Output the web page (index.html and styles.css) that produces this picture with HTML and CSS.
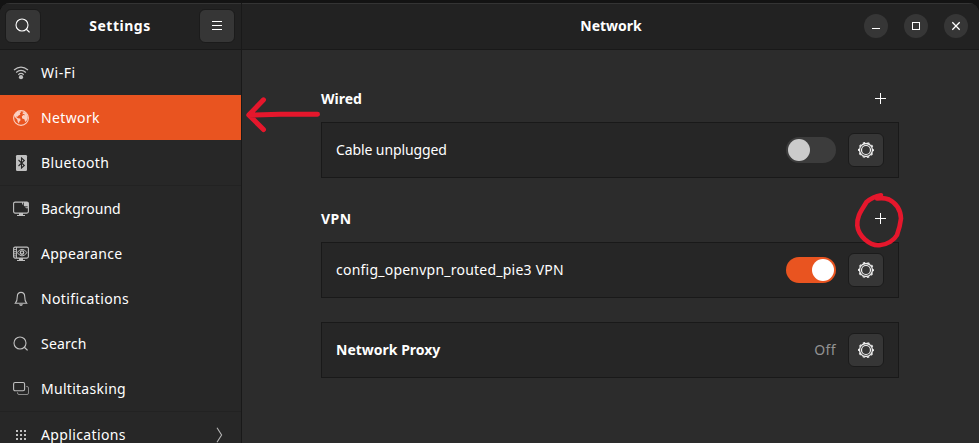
FILE: index.html
```html
<!DOCTYPE html>
<html lang="en">
<head>
<meta charset="utf-8">
<title>Settings</title>
<link rel="stylesheet" href="styles.css">
</head>
<body>
<svg class="defs" aria-hidden="true">
  <symbol id="gear" viewBox="0 0 18 18">
    <circle cx="9" cy="9" r="6.5" fill="none" stroke="currentColor" stroke-width="1.3"/>
    <circle cx="9" cy="9" r="7.4" fill="none" stroke="currentColor" stroke-width="1.2" stroke-dasharray="2.2 2.45" stroke-dashoffset="1.1"/>
    <circle cx="9" cy="9" r="4.5" fill="none" stroke="currentColor" stroke-width="1.2"/>
  </symbol>
  <symbol id="search" viewBox="0 0 16 16">
    <circle cx="7" cy="7" r="6" fill="none" stroke="currentColor" stroke-width="1.1"/>
    <path d="M11.3 11.3L14.6 14.4" fill="none" stroke="currentColor" stroke-width="1.3"/>
  </symbol>
</svg>
<div class="window">
  <aside class="sidebar">
    <header class="bar side-bar">
      <button class="btn"><svg class="icon"><use href="#search"/></svg></button>
      <h1 class="title wide">Settings</h1>
      <button class="btn"><svg class="icon" viewBox="0 0 16 16"><path d="M3 3.5h10M3 7.5h10M3 11.5h10" stroke="currentColor" shape-rendering="crispEdges"/></svg></button>
    </header>
    <nav class="nav">
      <a class="item t5"><svg class="icon" viewBox="0 0 16 16"><g fill="none" stroke="currentColor" stroke-width="1.2"><path d="M1 5Q8-.8 15 5M3.1 7.5Q8 3.2 12.9 7.5M5.3 9.7Q8 7.2 10.7 9.7"/></g><circle cx="8" cy="12.2" r="2.1" fill="currentColor"/></svg>Wi-Fi</a>
      <a class="item active t4"><svg class="icon" viewBox="0 0 16 16"><circle cx="8" cy="8" r="7.4" fill="none" stroke="currentColor" stroke-width="1.1"/><path d="M1.2 5.2Q3 1.5 7.2 1L8.3 2 6.8 3.2 7.4 4.6 5.6 5.4 4.5 6.8 3.2 6.4 3.8 7.5 5 8.2 7.2 8.6 7.6 10.2 6.3 11.5 6 13.6 4.8 12 4.2 9.5 2 7.2ZM9.8 2.2L12.2 2.3 14.3 5 14.8 8 13.6 10.8 12.2 12 11.4 9.3 9.2 8.4 8.8 6.6 10.3 5.1 12 5.3 11 4 9.6 4.2Z" fill="currentColor"/></svg>Network</a>
      <a class="item t4"><svg class="icon" viewBox="0 0 16 16"><rect x="3" width="11" height="16" rx="1.2" fill="currentColor"/><path d="M5.5 5L11.3 10.5 8.5 13V3L11.3 5.5 5.5 11" fill="none" stroke="#272727" stroke-width="1.1"/></svg>Bluetooth</a>
      <a class="item divided t0"><svg class="icon" viewBox="0 0 16 16"><rect x=".6" y="1.1" width="14.8" height="11" rx="1.5" fill="none" stroke="currentColor" stroke-width="1.1"/><path d="M9 1H14.4L15.4 2V7.2H13.2L9 3ZM6 12h4v2h2v1.1H4V14h2Z" fill="currentColor"/><path d="M10.4 1.7V5.8H14.6" stroke="#272727" fill="none" stroke-width=".9"/></svg>Background</a>
      <a class="item t3"><svg class="icon" viewBox="0 0 16 16"><rect x=".6" y="1.1" width="14.8" height="11" rx="1.5" fill="none" stroke="currentColor" stroke-width="1.1"/><path d="M6 12h4v2h2v1.1H4V14h2Z" fill="currentColor"/><path d="M3.5 1v11M1 3.6h2.5M1 5.7h2.5M1 7.8h2.5M1 9.9h2.5" stroke="currentColor" stroke-width=".9"/><path d="M4.2 6.6Q9-.1 14 6.6 9 13.2 4.2 6.6Z" fill="none" stroke="currentColor"/><circle cx="9" cy="6.6" r="1.7" fill="none" stroke="currentColor" stroke-width="1.4"/></svg>Appearance</a>
      <a class="item t4"><svg class="icon" viewBox="0 0 16 16"><path d="M2.4 12.2Q4.3 10 4.3 5.5 4.4 1.4 8 1.4T11.7 5.5Q11.7 10 13.6 12.2Z" fill="none" stroke="currentColor" stroke-width="1.1"/><path d="M6 13.2h4Q9.4 15 8 15T6 13.2Z" fill="currentColor"/></svg>Notifications</a>
      <a class="item t2"><svg class="icon"><use href="#search"/></svg>Search</a>
      <a class="item t3"><svg class="icon" viewBox="0 0 16 16"><rect x=".6" y="1.5" width="11" height="8.2" rx="1.5" fill="none" stroke="currentColor" stroke-width="1.1"/><path d="M13.2 5.5h.8q1.5 0 1.5 1.5v5q0 1.5-1.5 1.5H6q-1.500 0-1.500-1.500v-.7" fill="none" stroke="currentColor" opacity=".65"/></svg>Multitasking</a>
      <a class="item divided t4"><svg class="icon" viewBox="0 0 16 16"><path d="M3 4h10M3 8h10M3 12h10" stroke="currentColor" stroke-width="2" stroke-dasharray="2 2"/></svg>Applications<svg class="chevron" viewBox="0 0 7 16"><path d="M1 .8L5.6 8 1 15.2" fill="none" stroke="currentColor" stroke-width="1.1"/></svg></a>
    </nav>
  </aside>
  <main class="main">
    <header class="bar main-bar">
      <h2 class="title">Network</h2>
      <div class="controls">
        <button class="round"><svg viewBox="0 0 24 24"><path d="M8 14.5h8" stroke="currentColor" shape-rendering="crispEdges"/></svg></button>
        <button class="round"><svg viewBox="0 0 24 24"><path d="M8.5 8.5h7v7h-7z" fill="none" stroke="currentColor" shape-rendering="crispEdges"/></svg></button>
        <button class="round"><svg viewBox="0 0 24 24"><path d="M8.3 8.3l7.4 7.4M15.7 8.3l-7.4 7.4" stroke="currentColor" stroke-width="1.3"/></svg></button>
      </div>
    </header>
    <div class="content">
      <section>
        <div class="heading"><h3>Wired</h3><svg class="plus" viewBox="0 0 11 11"><path d="M5.5 0v11M0 5.5h11" stroke="currentColor" shape-rendering="crispEdges"/></svg></div>
        <div class="card"><span class="label tight">Cable unplugged</span><span class="switch"></span><button class="btn"><svg class="gear"><use href="#gear"/></svg></button></div>
      </section>
      <section>
        <div class="heading"><h3 class="wide">VPN</h3><svg class="plus" viewBox="0 0 11 11"><path d="M5.5 0v11M0 5.5h11" stroke="currentColor" shape-rendering="crispEdges"/></svg></div>
        <div class="card"><span class="label config">config_openvpn_routed_pie3 VPN</span><span class="switch on"></span><button class="btn"><svg class="gear"><use href="#gear"/></svg></button></div>
      </section>
      <section class="card"><strong class="label">Network Proxy</strong><span class="state t4">Off</span><button class="btn"><svg class="gear"><use href="#gear"/></svg></button></section>
    </div>
  </main>
</div>
<svg class="notes" viewBox="0 0 979 443" fill="none" stroke="#e5172c" stroke-linecap="round" stroke-linejoin="round">
  <path d="M317.500 114.200L280 114.300 249 115M263.500 99.800L248.800 115 263.500 129.500" stroke-width="5"/>
  <path d="M881 195.200Q873 196.500 866.500 202C862 210 856.500 216 857.300 225.500Q858 233 865 239.500 873 246.500 880.500 245C887 244.500 894 240.500 897 235Q900 227 901 218.500C900.500 208 896 203 889 199.500Q884 197.500 877 198.500" stroke-width="4.600"/>
</svg>
</body>
</html>
```
FILE: styles.css
```css
* { box-sizing: border-box; }
body {
  margin: 0;
  height: 443px;
  overflow: hidden;
  background: #131313;
  color: #fff;
  font: 14px/20px "Noto Sans", sans-serif;
  padding-top: 3px;
}
h1, h2, h3 { margin: 0; font-size: 14px; font-weight: 700; }
button { padding: 0; color: inherit; font: inherit; }
svg { display: block; }
.defs { position: absolute; width: 0; height: 0; }

.window {
  display: flex;
  height: 440px;
  border-radius: 10px 10px 0 0;
  overflow: hidden;
  background: #2c2c2c;
}
.bar {
  display: flex;
  align-items: center;
  height: 47px;
  background: #222;
  border-top: 1px solid #343434;
  border-bottom: 1px solid #191919;
}
.sidebar {
  width: 242px;
  flex: none;
  background: #272727;
  border-right: 1px solid #191919;
}
.side-bar { justify-content: space-between; padding: 0 6px 1px 5px; }
.btn {
  display: grid;
  place-items: center;
  width: 36px;
  height: 34px;
  background: #363636;
  border: 1px solid #1b1b1b;
  border-radius: 6px;
}
.icon { width: 16px; height: 16px; flex: none; }
.gear { width: 18px; height: 18px; color: #f0f0f0; }

.item {
  display: flex;
  align-items: center;
  height: 45px;
  padding: 0 18px 0 13px;
  gap: 12px;
}
.item .icon { color: #c0c0c0; }
.item.active { background: #e95420; }
.item.active .icon { color: #fbd0c2; }
.item.divided { height: 46px; border-top: 1px solid #222; }
.chevron { width: 7px; height: 16px; margin-left: auto; color: #b5b5b5; }

.main { flex: 1; min-width: 0; }
.main-bar {
  display: grid;
  grid-template-columns: 1fr auto 1fr;
  padding: 0 11px 1px 12px;
}
.main-bar .title { grid-column: 2; }
.controls { display: flex; justify-content: flex-end; gap: 16px; }
.round {
  width: 24px;
  height: 24px;
  border: 0;
  border-radius: 50%;
  background: #363636;
}
.content {
  display: grid;
  gap: 24px;
  width: 578px;
  margin: 32px 0 0 79px;
}
.heading {
  display: flex;
  justify-content: space-between;
  align-items: center;
  height: 40px;
  padding: 0 13px 7px 0;
}
.plus { width: 11px; height: 11px; }
.card {
  display: flex;
  align-items: center;
  gap: 12px;
  height: 56px;
  padding: 0 14px;
  background: #262626;
  border: 1px solid #191919;
}
.label { flex: 1; }
.state { color: #929292; }
.switch {
  display: flex;
  width: 50px;
  height: 26px;
  padding: 2px;
  border-radius: 13px;
  background: #3c3c3c;
}
.switch::after {
  content: "";
  width: 22px;
  height: 22px;
  border-radius: 50%;
  background: #cbcbcb;
}
.switch.on { justify-content: flex-end; background: #e95420; }
.switch.on::after { background: #fff; }

.tight { letter-spacing: -.1px; }
.t0 { letter-spacing: 0; }
.t2 { letter-spacing: .2px; }
.config { letter-spacing: .23px; }
.t3 { letter-spacing: .28px; }
.t4 { letter-spacing: .37px; }
.t5, .wide { letter-spacing: .5px; }

.notes {
  position: absolute;
  top: 0;
  left: 0;
  width: 979px;
  height: 443px;
  pointer-events: none;
}
```
